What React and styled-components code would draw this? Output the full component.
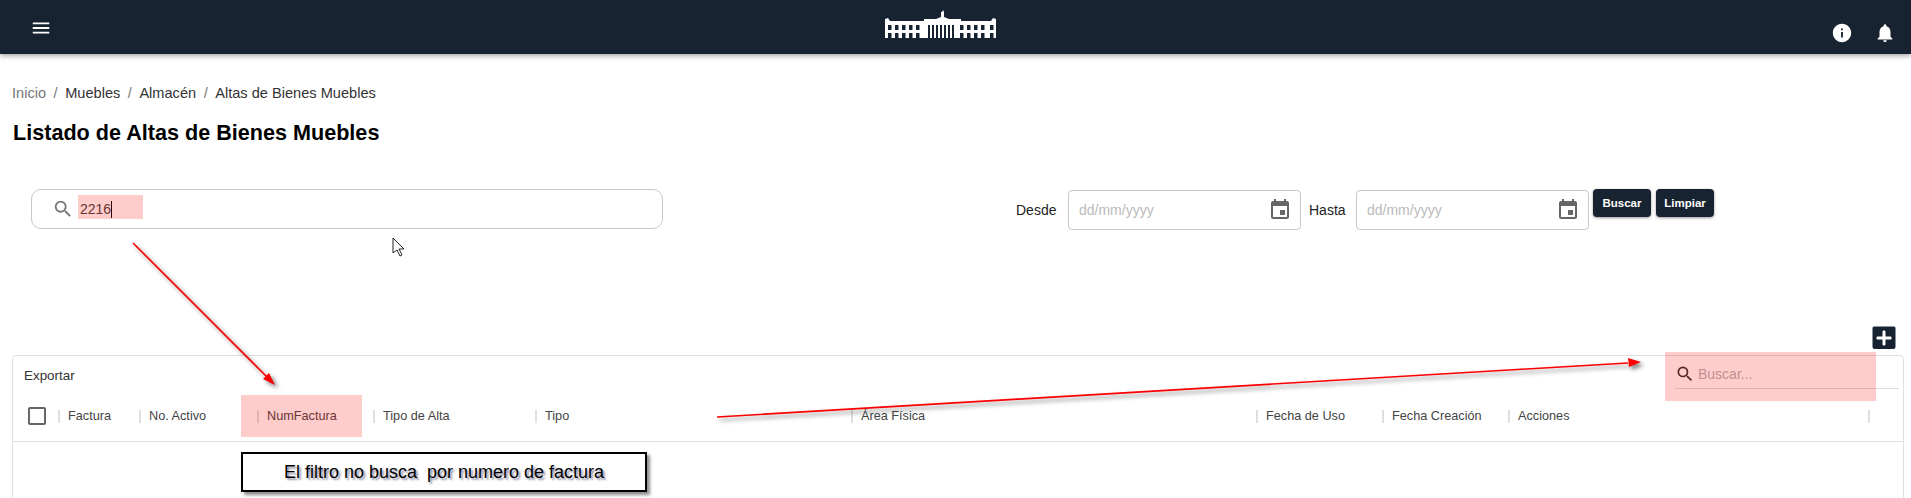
import React from 'react';
import styled, { createGlobalStyle } from 'styled-components';
import { MdMenu, MdSearch, MdInfo, MdNotifications, MdEvent, MdAdd, MdCheckBoxOutlineBlank } from 'react-icons/md';

const GlobalStyle = createGlobalStyle`
    html, body {
        margin:0;
        padding:0;
        height:498px;
        overflow:hidden;
        background-color:#fff;
        font-family:"Liberation Sans", Arial, sans-serif;
        color:#222;
    }
`;

const navy = '#172331';

const Page = styled.div`
    position:relative;
    width:1911px;
    height:498px;
    overflow:hidden;
`;
const Header = styled.header`
    position:relative;
    display:flex;
    align-items:center;
    justify-content:space-between;
    height:54px;
    padding:0 15px 0 30px;
    box-sizing:border-box;
    background-color:${navy};
    color:#fff;
    box-shadow:0 2px 5px rgba(0,0,0,0.35);
`;
const HeaderIcons = styled.div`
    display:flex;
    align-items:center;
    gap:21px;
    padding-top:12px;
    font-size:22px;
    svg { display:block; }
`;
const MenuButton = styled.div`
    width:22px;
    padding-top:2px;
    font-size:22px;
    svg { display:block; }
`;
const LogoWrap = styled.div`
    padding-bottom:6px;
    svg { display:block; }
`;
const Main = styled.main`
    padding:0 7px 0 12px;
`;
const Breadcrumb = styled.nav`
    display:flex;
    gap:7.5px;
    padding-top:31px;
    font-size:14.6px;
    line-height:16px;
    color:#333;
`;
const Crumb = styled.span`
    color:${(p) => (p.$muted ? '#777' : '#333')};
`;
const Title = styled.h1`
    margin:20px 0 0 1px;
    font-size:21.6px;
    line-height:24px;
    font-weight:700;
    color:#000;
`;
const Filters = styled.div`
    display:flex;
    align-items:flex-start;
    margin-top:44px;
    padding-left:19px;
`;
const SearchBox = styled.div`
    display:flex;
    align-items:center;
    gap:6px;
    width:632px;
    height:40px;
    padding-left:20px;
    box-sizing:border-box;
    border:1px solid #c8c8c8;
    border-radius:10px;
    font-size:14px;
    color:#444;
`;
const SearchGlyph = styled(MdSearch)`
    flex:none;
    font-size:${(p) => p.$size || 22}px;
    color:${(p) => p.$tone || '#777'};
`;
const Caret = styled.span`
    display:inline-block;
    width:1px;
    height:17px;
    vertical-align:-4px;
    background-color:#000;
`;
const DateGroup = styled.div`
    display:flex;
    align-items:flex-start;
    margin-left:353px;
`;
const DateLabel = styled.label`
    width:${(p) => p.$w}px;
    padding-top:13px;
    font-size:14px;
    line-height:16px;
    color:#222;
`;
const DateField = styled.div`
    display:flex;
    align-items:center;
    justify-content:space-between;
    width:233px;
    height:40px;
    margin:1px ${(p) => p.$gap}px 0 0;
    padding:0 8px 0 10px;
    box-sizing:border-box;
    border:1px solid #c8c8c8;
    border-radius:4px;
    font-size:20px;
    color:#666;
    svg { flex:none; }
`;
const DateInput = styled.input`
    width:150px;
    border:0;
    outline:0;
    padding:0;
    font:14px "Liberation Sans", Arial, sans-serif;
    &::placeholder { color:#bbb; opacity:1; }
`;
const ActionButton = styled.button`
    height:28px;
    width:${(p) => p.$w}px;
    margin-right:5px;
    padding:0;
    border:0;
    border-radius:4px;
    background-color:${navy};
    color:#fff;
    font:700 11.5px "Liberation Sans", Arial, sans-serif;
    box-shadow:0 1px 3px rgba(0,0,0,0.4);
`;
const AddRow = styled.div`
    display:flex;
    justify-content:flex-end;
    margin-top:96px;
    padding-right:8px;
`;
const AddButton = styled.div`
    display:flex;
    align-items:center;
    justify-content:center;
    width:24px;
    height:23px;
    border-radius:3px;
    background-color:${navy};
    color:#fff;
    font-size:24px;
    svg { stroke:currentColor; stroke-width:1; }
`;
const Card = styled.section`
    height:200px;
    margin-top:6px;
    border:1px solid #e0e0e0;
    border-radius:4px;
    box-sizing:border-box;
`;
const Toolbar = styled.div`
    display:flex;
    align-items:flex-start;
    justify-content:space-between;
    height:39px;
    padding:0 4px 0 11px;
`;
const ToolbarLink = styled.span`
    padding-top:12px;
    font-size:13.4px;
    line-height:16px;
    color:#333;
`;
const QuickSearch = styled.div`
    display:flex;
    align-items:center;
    gap:3px;
    width:224px;
    height:33px;
    box-sizing:border-box;
    padding-top:3px;
    border-bottom:1px solid #ddd;
    font-size:14px;
    color:#aaa;
`;
const QuickInput = styled.input`
    width:180px;
    border:0;
    outline:0;
    padding:0;
    background:transparent;
    font:14px "Liberation Sans", Arial, sans-serif;
    &::placeholder { color:#b4b4b4; opacity:1; }
`;
const HeadRow = styled.div`
    display:flex;
    align-items:center;
    height:47px;
    padding-bottom:4px;
    box-sizing:border-box;
    border-bottom:1px solid #e0e0e0;
`;
const CheckCell = styled.div`
    width:45px;
    padding-left:12px;
    box-sizing:border-box;
    font-size:24px;
    color:#666;
    svg { display:block; }
`;
const HeadCell = styled.div`
    display:flex;
    align-items:center;
    gap:8px;
    flex:none;
    width:${(p) => p.$w}px;
    font-size:12.7px;
    line-height:16px;
    color:#444;
    white-space:nowrap;
    &::before {
        content:"";
        width:2px;
        height:13px;
        background-color:#e0e0e0;
    }
`;
const Highlight = styled.div`
    position:absolute;
    left:${(p) => p.$x}px;
    top:${(p) => p.$y}px;
    width:${(p) => p.$w}px;
    height:${(p) => p.$h}px;
    background-color:rgba(255,0,0,0.2);
`;
const Callout = styled.div`
    position:absolute;
    left:241px;
    top:452px;
    display:flex;
    align-items:center;
    justify-content:center;
    width:406px;
    height:40px;
    box-sizing:border-box;
    border:2px solid #000;
    background-color:#fff;
    box-shadow:3px 3px 3px rgba(0,0,0,0.45);
    font-size:18px;
    white-space:pre;
    color:#000;
    text-shadow:2px 2px 2px rgba(0,0,60,0.45);
`;
const Marks = styled.svg`
    position:absolute;
    left:0;
    top:0;
    pointer-events:none;
    filter:drop-shadow(3px 3px 2px rgba(0,0,0,0.5));
`;
const Pointer = styled.svg`
    position:absolute;
    left:392px;
    top:237px;
`;

const columns = [
    { label:'Factura', w:81 },
    { label:'No. Activo', w:118 },
    { label:'NumFactura', w:116 },
    { label:'Tipo de Alta', w:162 },
    { label:'Tipo', w:316 },
    { label:'Área Física', w:405 },
    { label:'Fecha de Uso', w:126 },
    { label:'Fecha Creación', w:126 },
    { label:'Acciones', w:360 },
    { label:'', w:20 },
];

function Logo() {
    const windows = [];
    [3, 10, 17, 24, 31, 75, 82, 89, 96, 105].forEach((x) => {
        windows.push(<rect key={`a${x}`} x={x} y={15} width={3.5} height={5} fill={navy} />);
        windows.push(<rect key={`b${x}`} x={x} y={23} width={3.5} height={5} fill={navy} />);
    });
    return (
        <svg width="113" height="28" viewBox="0 0 113 28" fill="#fff">
            <path d="M0 11V9l3-1 2 3h34V9h12l5-2V2h1l1-2 1 2v5l5 2h12v2h30l2-3 3 1v2 17H0z" />
            {windows}
            {[43, 47, 51, 55, 59, 63, 67].map((x) => (
                <rect key={x} x={x} y={15} width={2} height={13} fill={navy} />
            ))}
        </svg>
    );
}

function App() {
    return (
        <Page>
            <GlobalStyle />
            <Header>
                <MenuButton><MdMenu /></MenuButton>
                <LogoWrap><Logo /></LogoWrap>
                <HeaderIcons><MdInfo /><MdNotifications /></HeaderIcons>
            </Header>
            <Main>
                <Breadcrumb>
                    <Crumb $muted>Inicio</Crumb><Crumb $muted>/</Crumb>
                    <Crumb>Muebles</Crumb><Crumb $muted>/</Crumb>
                    <Crumb>Almacén</Crumb><Crumb $muted>/</Crumb>
                    <Crumb>Altas de Bienes Muebles</Crumb>
                </Breadcrumb>
                <Title>Listado de Altas de Bienes Muebles</Title>
                <Filters>
                    <SearchBox>
                        <SearchGlyph />
                        <span>2216<Caret /></span>
                    </SearchBox>
                    <DateGroup>
                        <DateLabel $w={52}>Desde</DateLabel>
                        <DateField $gap={8}>
                            <DateInput placeholder="dd/mm/yyyy" />
                            <MdEvent size={24} />
                        </DateField>
                        <DateLabel $w={47}>Hasta</DateLabel>
                        <DateField $gap={4}>
                            <DateInput placeholder="dd/mm/yyyy" />
                            <MdEvent size={24} />
                        </DateField>
                        <ActionButton $w={58}>Buscar</ActionButton>
                        <ActionButton $w={58}>Limpiar</ActionButton>
                    </DateGroup>
                </Filters>
                <AddRow><AddButton><MdAdd /></AddButton></AddRow>
                <Card>
                    <Toolbar>
                        <ToolbarLink>Exportar</ToolbarLink>
                        <QuickSearch>
                            <SearchGlyph $tone="#333" $size={20} />
                            <QuickInput placeholder="Buscar..." />
                        </QuickSearch>
                    </Toolbar>
                    <HeadRow>
                        <CheckCell><MdCheckBoxOutlineBlank /></CheckCell>
                        {columns.map((c, i) => <HeadCell key={i} $w={c.w}>{c.label}</HeadCell>)}
                    </HeadRow>
                </Card>
            </Main>
            <Highlight $x={78} $y={195} $w={65} $h={24} />
            <Highlight $x={241} $y={395} $w={121} $h={42} />
            <Highlight $x={1665} $y={352} $w={211} $h={49} />
            <Marks width="1911" height="498">
                <line x1="133" y1="243" x2="270" y2="380" stroke="#f00" strokeWidth="1.6" />
                <polygon points="275,385 263,379 269,373" fill="#f00" />
                <line x1="717" y1="417" x2="1628" y2="363" stroke="#f00" strokeWidth="1.6" />
                <polygon points="1641,362 1628,358 1629,367" fill="#f00" />
            </Marks>
            <Pointer width="14" height="20" viewBox="0 0 14 20">
                <path d="M1 1v15l4-3 3 6 2-1-3-6h5z" fill="#fff" stroke="#222" strokeWidth="1" />
            </Pointer>
            <Callout>El filtro no busca  por numero de factura</Callout>
        </Page>
    );
}

export default App;
